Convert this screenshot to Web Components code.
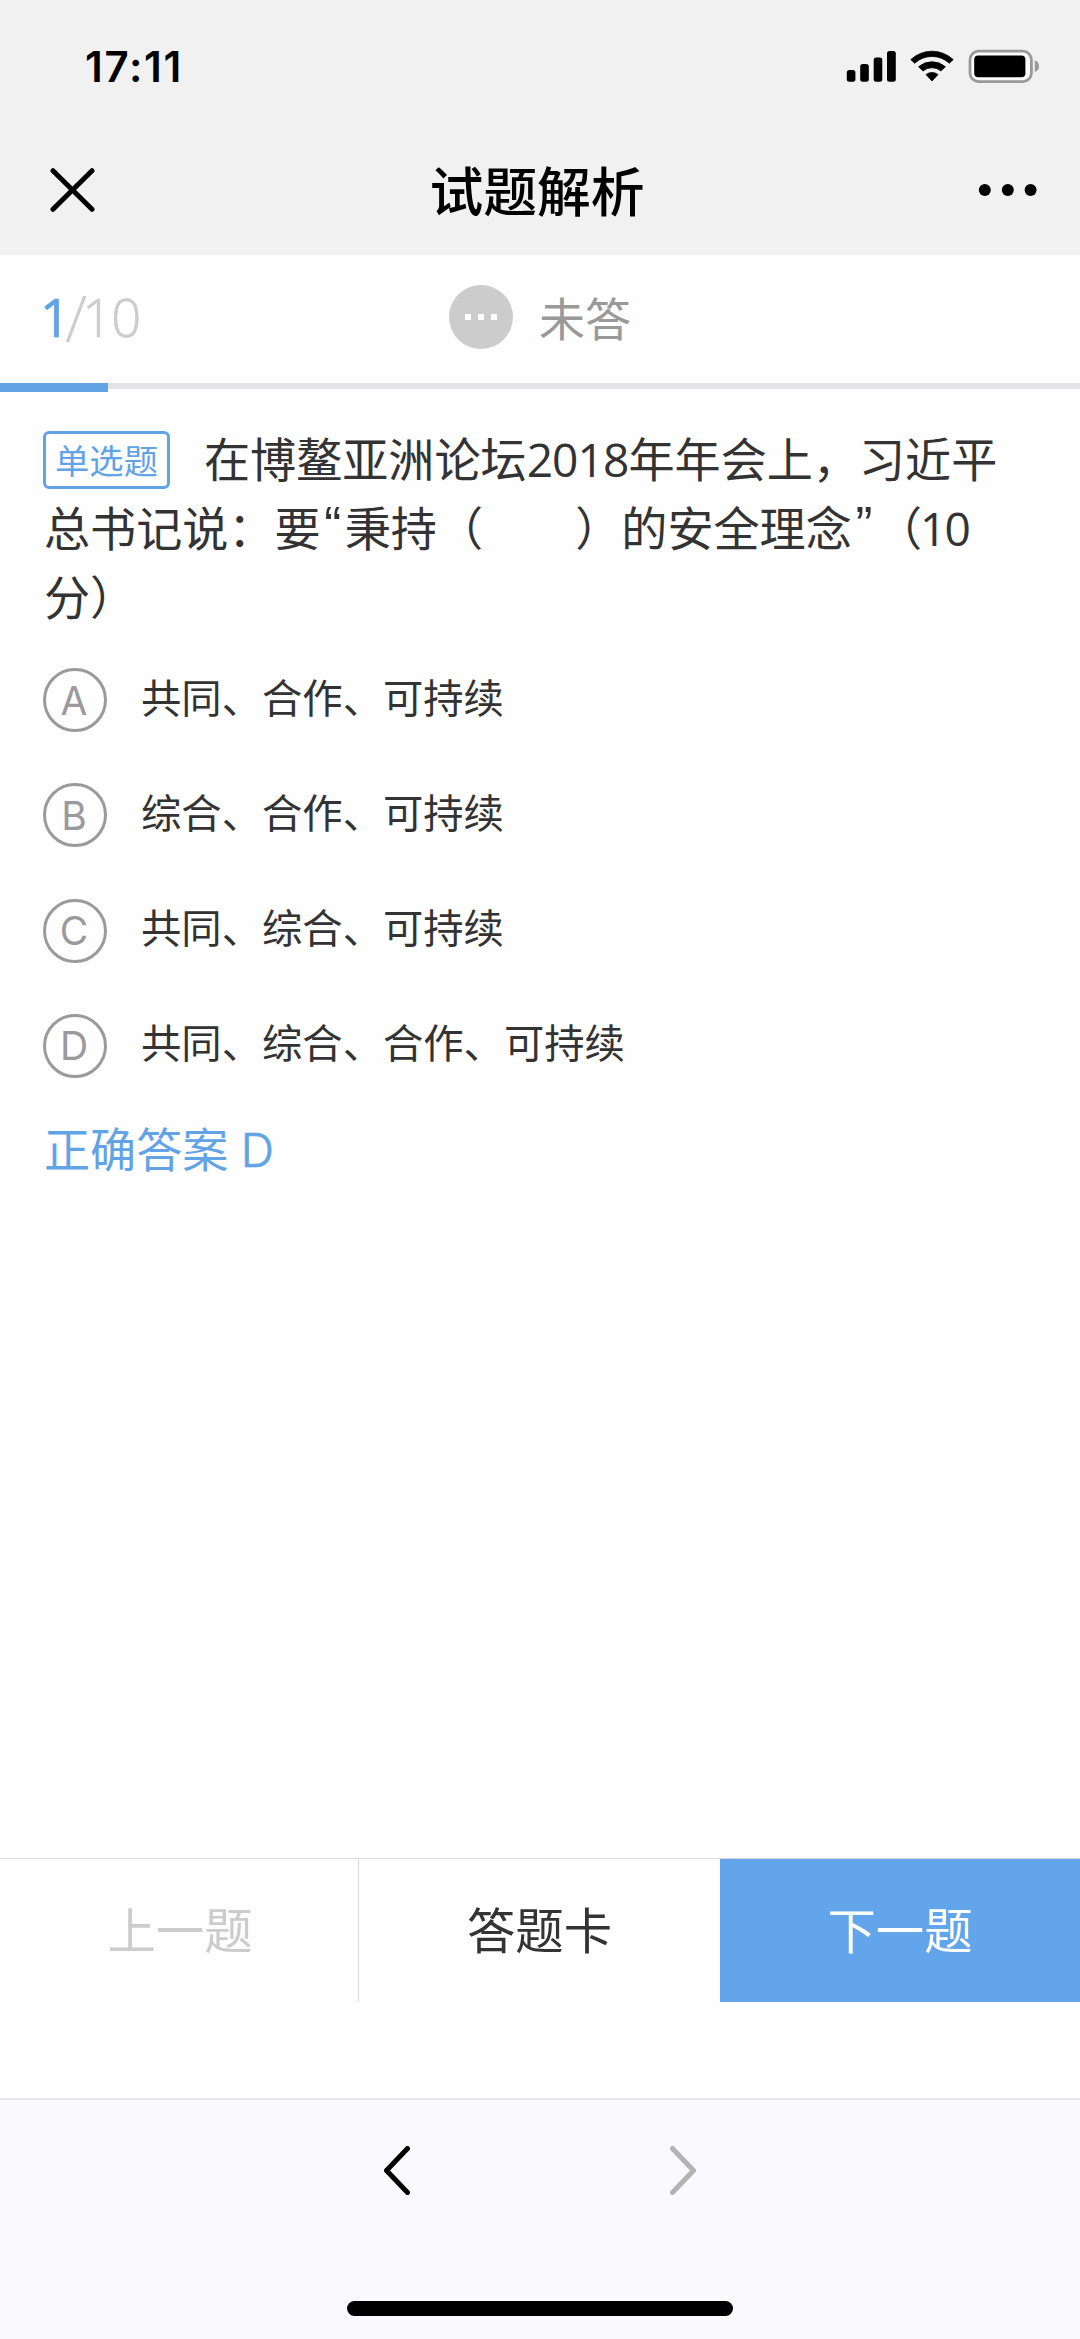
<!DOCTYPE html>
<html lang="zh-CN">
<head>
<meta charset="utf-8">
<title>试题解析</title>
<style>
html,body{margin:0;padding:0}
body{font-family:"Noto Sans CJK SC",sans-serif;color:#333;background:#fefefe}
</style>
</head>
<body>
<quiz-app></quiz-app>
<script>
const define=(name,css,html)=>customElements.define(name,class extends HTMLElement{
  constructor(){
    super();
    const t=document.createElement('template');
    t.innerHTML=`<style>*{box-sizing:border-box}svg{display:block}${css}</style>${html}`;
    this.attachShadow({mode:'open'}).append(t.content.cloneNode(true));
  }
});

define('status-bar',`
:host{display:flex;height:132px;padding:0 39px 0 85px;justify-content:space-between;align-items:center;background:#f1f1f1;color:#000;box-sizing:border-box}
time{font:600 42px/50px Inter,sans-serif;letter-spacing:1.7px;padding-top:1px}
`,`<time>17:11</time>
<svg width="195" height="36" viewBox="846 48 195 36">
<rect x="846.8" y="70" width="8.6" height="11.8" rx="2.5"/><rect x="860.2" y="64" width="8.6" height="17.8" rx="2.5"/><rect x="873.7" y="57.6" width="8.6" height="24.2" rx="2.5"/><rect x="887" y="51" width="8.8" height="30.8" rx="2.5"/>
<path stroke="#000" stroke-width=".8" stroke-linejoin="round" d="M910.8 59.6A31 31 0 0 1 953.2 59.6L949.3 63.2A25.5 25.5 0 0 0 914.7 63.2ZM918.6 66.8A20.4 20.4 0 0 1 945.4 66.8L941 71A14 14 0 0 0 923 71ZM926 74.6A9.6 9.6 0 0 1 938 74.6L932 81Z"/>
<rect x="970" y="51.2" width="61.4" height="30.4" rx="8.5" fill="#fdfdfd" stroke="#999" stroke-width="2.8"/><rect x="974.2" y="55.6" width="51.2" height="21.6" rx="4"/><path d="M1034.8 60.3Q1039 62 1039 66.2T1034.8 72Z" fill="#999"/></svg>`);

define('nav-bar',`
:host{display:flex;height:123px;padding:0 43px 6px 50px;justify-content:space-between;align-items:center;background:#f1f1f1;color:#000;box-sizing:border-box;border-bottom:1px solid #eee}
h1{margin:0 0 3px -13px;font-size:53.8px;line-height:70px;font-weight:500}
svg{flex:none}
`,`<svg width="59" height="46" viewBox="0 0 59 46"><path d="M3 3.7 42 42.3M42 3.7 3 42.3" stroke="#000" stroke-width="5" stroke-linecap="round"/></svg>
<h1><slot></slot></h1>
<svg width="59" height="14" viewBox="0 0 59 14"><circle cx="6.8" cy="7" r="6"/><circle cx="29.8" cy="7" r="6"/><circle cx="52.6" cy="7" r="6"/></svg>`);

define('quiz-progress',`
:host{display:block;height:137px}
.row{display:flex;height:128px;align-items:center;padding:0 0 4px 40px}
.count{width:409px;height:60px;font:300 52.5px/60px "Open Sans",sans-serif;letter-spacing:-.9px;color:#ccc;white-space:nowrap;-webkit-text-stroke:.7px}
b{font-weight:400;color:#62a3e6;letter-spacing:-3px}
.s{font-size:65px;line-height:40px;vertical-align:-5px;margin:0 -4px 0 -2px;-webkit-text-stroke:0}
.state{margin-left:26px;font-size:46px;line-height:60px;color:#999;padding-bottom:3px}
.bar{height:6px;background:#e4e3e5}
.bar i{display:block;width:108px;height:9px;background:#62a3e6}
`,`<div class="row"><div class="count"><b>1</b><span class="s">/</span>10</div>
<svg width="64" height="64"><circle cx="32" cy="32" r="32" fill="#ccc"/><path d="M16 29h6v6h-6zM29 29h6v6h-6zM42 29h6v6h-6z" fill="#fff"/></svg>
<div class="state">未答</div></div><div class="bar"><i></i></div>`);

define('quiz-question',`
:host{display:block;padding:31px 70px 2px 44px;font-size:46.1px;line-height:69px}
.tag{display:inline-block;width:127px;height:58px;margin:0 34px 0 -1px;border:3px solid #62a3e6;border-radius:6px;font-size:34.3px;line-height:50px;text-align:center;color:#62a3e6;vertical-align:3px}
div{white-space:nowrap;height:69px}
.q{display:inline-block;width:24.2px;text-align:center;font-family:"Liberation Sans",sans-serif;font-size:51px;line-height:40px;vertical-align:3px}
.n{font-family:"Open Sans",sans-serif;font-weight:400;letter-spacing:-.9px;line-height:60px}
.m{margin-left:-2px;letter-spacing:-2px}
`,`<div><span class="tag">单选题</span>在博鳌亚洲论坛<span class="n">2018</span>年年会上，习近平</div><div>总书记说：要<span class="q">“</span>秉持（　　）的安全理念<span class="q">”</span>（<span class="n m">10</span></div><div>分）</div>`);

define('quiz-option',`
:host{display:flex;height:64px;align-items:center;font-size:40.35px;line-height:60px}
.k{display:flex;justify-content:center;align-items:center;width:64px;height:64px;border:3px solid #9b999d;border-radius:50%;font:400 39px/1 Inter,sans-serif;color:#9b999d;margin-right:34px;padding-right:2px}
.t{padding-bottom:9px}
`,`<span class="k"><slot name="key"></slot></span><span class="t"><slot></slot></span>`);

define('option-list',`
:host{display:flex;flex-direction:column;gap:51.3px;padding:36px 0 0 43px}
`,`<slot></slot>`);

define('right-answer',`
:host{display:block;padding:35px 0 0 44px;font-size:46.1px;line-height:69px;color:#62a3e6}
::slotted(span){font-family:Inter,sans-serif;font-weight:300;line-height:60px;margin-left:2px;-webkit-text-stroke:.7px}
`,`<slot></slot>`);

define('quiz-actions',`
:host{display:flex;height:144px;font-size:48.4px;line-height:60px}
div{flex:1;display:flex;align-items:center;justify-content:center;border-top:1px solid #d9d9d9;padding-bottom:6px}
.prev{color:#ccc;border-right:1px solid #ddd;flex:0 0 359px;padding-left:2px}
.next{color:#fff;background:#62a5ea;flex:0 0 360px}
`,`<div class="prev">上一题</div><div>答题卡</div><div class="next">下一题</div>`);

define('browser-bar',`
:host{display:flex;flex-direction:column;align-items:center;height:241px;background:#faf9fd;border-top:2px solid #e6e5e9;box-sizing:border-box}
.nav{display:flex;gap:260px;padding-top:46px}
.home{width:386px;height:15px;border-radius:8px;background:#000;margin-top:106px}
path{fill:none;stroke-width:5;stroke-linecap:round;stroke-linejoin:round}
`,`<div class="nav"><svg width="26" height="49"><path d="M23.5 2.5 2.5 24.5 23.5 46.5" stroke="#000"/></svg><svg width="26" height="49"><path d="M2.5 2.5 23.5 24.5 2.5 46.5" stroke="#b3b3b6"/></svg></div><div class="home"></div>`);

define('quiz-app',`
:host{display:flex;flex-direction:column;width:1080px;height:2339px;background:#fefefe}
main{flex:1}
quiz-actions{margin-bottom:96px}
`,`<status-bar></status-bar><nav-bar>试题解析</nav-bar>
<main><quiz-progress></quiz-progress><quiz-question></quiz-question>
<option-list>
<quiz-option><span slot="key">A</span>共同、合作、可持续</quiz-option>
<quiz-option><span slot="key">B</span>综合、合作、可持续</quiz-option>
<quiz-option><span slot="key">C</span>共同、综合、可持续</quiz-option>
<quiz-option><span slot="key">D</span>共同、综合、合作、可持续</quiz-option>
</option-list>
<right-answer>正确答案 <span>D</span></right-answer></main>
<quiz-actions></quiz-actions><browser-bar></browser-bar>`);
</script>
</body>
</html>
